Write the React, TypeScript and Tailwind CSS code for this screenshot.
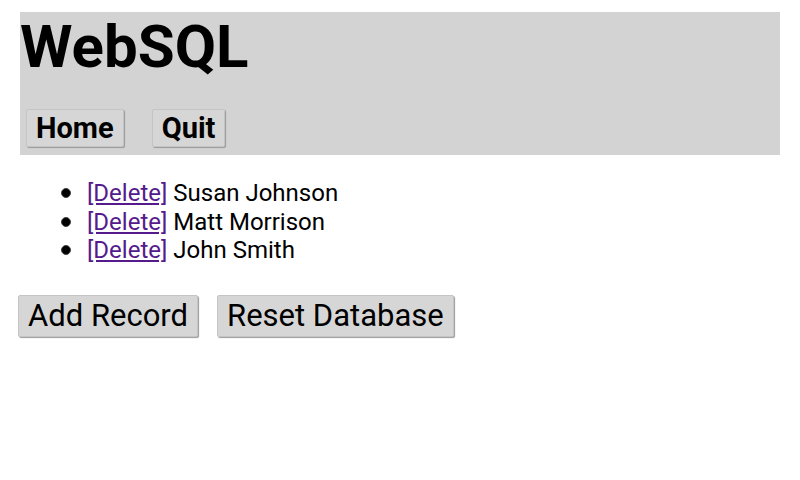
import React from "react";

const btn =
  "bg-[#d6d6d6] border border-[#c4c4c4] rounded-[2px] shadow-[1px_1px_1px_#9a9a9a] text-black leading-none";

export default function App() {
  const people = ["Susan Johnson", "Matt Morrison", "John Smith"];
  return (
    <div className="w-[800px] h-[480px] bg-white font-['Roboto',sans-serif] text-black overflow-hidden">
      <div className="ml-[20px] mt-[12px] w-[760px] h-[143px] bg-[#d3d3d3] flex flex-col">
        <h1 className="text-[60px] font-bold leading-[70px] h-[70px]">WebSQL</h1>
        <div className="flex gap-[28px] ml-[6px] mt-[27px]">
          <button className={`${btn} h-[38px] px-[9px] text-[29px] font-bold`}>Home</button>
          <button className={`${btn} h-[38px] px-[9px] text-[29px] font-bold`}>Quit</button>
        </div>
      </div>
      <ul className="mt-[24px] text-[24px] leading-[28.5px]">
        {people.map((p) => (
          <li key={p} className="flex items-center">
            <span className="w-[87px] flex justify-end pr-[16px]">
              <span className="block w-[10px] h-[10px] rounded-full bg-black border border-[#444]" />
            </span>
            <span>
              <a href="#" className="text-[#551a8b] underline">[Delete]</a> {p}
            </span>
          </li>
        ))}
      </ul>
      <div className="flex gap-[19px] ml-[18px] mt-[30px]">
        <button className={`${btn} h-[42px] px-[9px] text-[31px]`}>Add Record</button>
        <button className={`${btn} h-[42px] px-[9px] text-[31px]`}>Reset Database</button>
      </div>
    </div>
  );
}
